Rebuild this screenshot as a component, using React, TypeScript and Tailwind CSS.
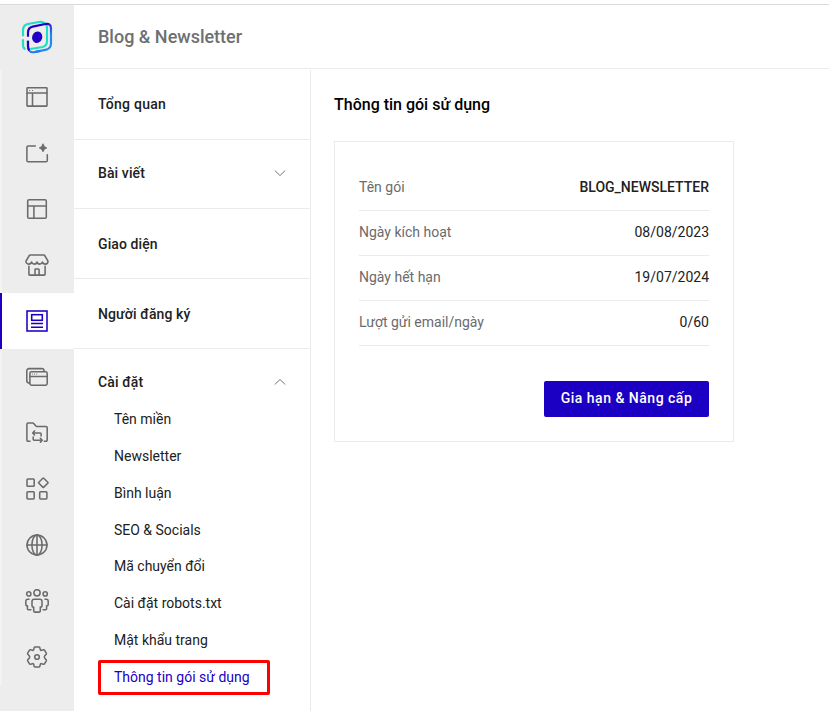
import type { ReactNode } from "react";

function Icon({ children }: { children: ReactNode }) {
  return (
    <svg
      width="24"
      height="24"
      viewBox="0 0 24 24"
      fill="none"
      stroke="currentColor"
      strokeWidth="1.55"
      strokeLinecap="round"
      strokeLinejoin="round"
    >
      {children}
    </svg>
  );
}

const navIcons: { name: string; art: ReactNode }[] = [
  {
    name: "pages",
    art: (
      <>
        <rect x="2" y="2.7" width="20" height="18.4" rx="0.6" />
        <path d="M2 8h20M7.5 8v13" />
        <path d="M4.6 5.5h.1M7.5 5.5h.1" strokeWidth="1.2" />
      </>
    ),
  },
  {
    name: "popup",
    art: (
      <>
        <path d="M10.3 4.9H3.2a1.3 1.3 0 0 0-1.3 1.3v13.2a1.3 1.3 0 0 0 1.3 1.3h17.8a1.3 1.3 0 0 0 1.3-1.3v-5.7" />
        <path
          d="M18 3.2Q18.8 6.2 21.7 6.9Q18.8 7.7 18 10.7Q17.2 7.7 14.3 6.9Q17.2 6.2 18 3.2z"
          fill="currentColor"
          strokeWidth="1"
        />
      </>
    ),
  },
  {
    name: "layout",
    art: (
      <>
        <rect x="2.7" y="2.7" width="18.6" height="18.6" rx="1.3" />
        <path d="M2.7 9h18.6M8.9 9v12.3" />
      </>
    ),
  },
  {
    name: "store",
    art: (
      <>
        <path d="M5.2 2h13.6a1 1 0 0 1 .9.5l3.3 5.7c0 1.7-1.1 2.9-2.7 2.9s-2.7-.9-2.9-2.1c-.3 1.2-1.2 2.1-2.7 2.1s-2.5-.9-2.7-2.1c-.2 1.2-1.2 2.1-2.7 2.1s-2.4-.9-2.7-2.1c-.2 1.2-1.3 2.1-2.9 2.1S1 9.9 1 8.2l3.3-5.7a1 1 0 0 1 .9-.5z" />
        <path d="M3.9 13.2v8a.9.9 0 0 0 .9.9h14.4a.9.9 0 0 0 .9-.9v-8M10 22v-5.3a.7.7 0 0 1 .7-.7h2.7a.7.7 0 0 1 .7.7V22" />
      </>
    ),
  },
  {
    name: "blog",
    art: (
      <>
        <rect x="2" y="2" width="20" height="20" strokeLinejoin="miter" />
        <rect x="6.7" y="5.7" width="10.6" height="5.6" strokeLinejoin="miter" />
        <path d="M6 14.4h12M6 18.2h12" strokeLinecap="butt" />
      </>
    ),
  },
  {
    name: "windows",
    art: (
      <>
        <rect x="4.9" y="6.8" width="17.3" height="13.4" rx="1.6" />
        <path d="M4.9 11.4h17.3" />
        <path d="M4.3 18.2a2.6 2.6 0 0 1-2.5-2.6V5.8a2.2 2.2 0 0 1 2.2-2.2h12.7a2.6 2.6 0 0 1 2.5 2.6" />
        <path d="M7.3 9.1h.1M9.5 9.1h.1M11.7 9.1h.1" strokeWidth="1" />
      </>
    ),
  },
  {
    name: "folder",
    art: (
      <>
        <path d="M5 20.3H3.1A1.2 1.2 0 0 1 1.9 19.1V3.2A1.2 1.2 0 0 1 3.1 2h4.7a1.2 1.2 0 0 1 .9.4l2.2 2.7a1.2 1.2 0 0 0 .9.4h9.2a1.2 1.2 0 0 1 1.2 1.2v12.4a1.2 1.2 0 0 1-1.2 1.2h-1.7" />
        <path d="M9.5 9.9L7.7 11.9l1.8 2M7.9 11.9h7.3a.9.9 0 0 1 .9.9v2.2M15.4 17.2l1.8 2-1.8 2M17 19.2H9.1a.9.9 0 0 1-.9-.9v-2.2" />
      </>
    ),
  },
  {
    name: "apps",
    art: (
      <>
        <rect x="2" y="2" width="7.2" height="7.2" rx="0.8" />
        <rect x="2" y="14.7" width="7.2" height="7.2" rx="0.8" />
        <rect x="14.7" y="14.7" width="7.2" height="7.2" rx="0.8" />
        <rect x="14.8" y="2.2" width="7" height="7" rx="0.7" transform="rotate(45 18.3 5.7)" />
      </>
    ),
  },
  {
    name: "globe",
    art: (
      <>
        <circle cx="12" cy="12" r="10" />
        <ellipse cx="12" cy="12" rx="5.1" ry="10" />
        <path d="M2 12h20M12 2v20" />
      </>
    ),
  },
  {
    name: "people",
    art: (
      <>
        <circle cx="12" cy="3.8" r="3.1" />
        <circle cx="3.8" cy="4.9" r="2.1" />
        <circle cx="20.2" cy="4.9" r="2.1" />
        <path d="M9.2 10.2h5.6a2.2 2.2 0 0 1 2.2 2.2v4.3a1.4 1.4 0 0 1-1.4 1.4h-.3v4a1 1 0 0 1-1 1H9.7a1 1 0 0 1-1-1v-4h-.3A1.4 1.4 0 0 1 7 16.7v-4.3a2.2 2.2 0 0 1 2.2-2.2z" />
        <path d="M4 10.2h-1.2A2 2 0 0 0 .8 12.2v3.4a1.2 1.2 0 0 0 1.2 1.2h.4v3a1 1 0 0 0 1 1h2.5M20 10.2h1.2a2 2 0 0 1 2 2v3.4a1.2 1.2 0 0 1-1.2 1.2h-.4v3a1 1 0 0 1-1 1h-2.5" />
      </>
    ),
  },
  {
    name: "settings",
    art: (
      <>
        <path d="M10 2h4a.8.8 0 0 1 .8.6l.5 2a1 1 0 0 0 1.3.7l1.9-.6a.9.9 0 0 1 1 .4l1.8 3.1a.9.9 0 0 1-.1 1l-1.4 1.6a1.8 1.8 0 0 0 0 2.4l1.4 1.6a.9.9 0 0 1 .1 1l-1.8 3.1a.9.9 0 0 1-1 .4l-1.9-.6a1 1 0 0 0-1.3.7l-.5 2a.8.8 0 0 1-.8.6h-4a.8.8 0 0 1-.8-.6l-.5-2a1 1 0 0 0-1.3-.7l-1.9.6a.9.9 0 0 1-1-.4l-1.8-3.1a.9.9 0 0 1 .1-1l1.4-1.6a1.8 1.8 0 0 0 0-2.4L2.8 9.2a.9.9 0 0 1-.1-1l1.8-3.1a.9.9 0 0 1 1-.4l1.9.6a1 1 0 0 0 1.3-.7l.5-2A.8.8 0 0 1 10 2z" />
        <circle cx="12" cy="12" r="2.3" />
      </>
    ),
  },
];

function Logo() {
  return (
    <svg width="34" height="36" viewBox="60 57 102 108" fill="none" strokeWidth="6.5">
      <defs>
        <linearGradient id="frame" x1="95" y1="75" x2="150" y2="115" gradientUnits="userSpaceOnUse">
          <stop offset="0.5" stopColor="#2000c4" />
          <stop offset="0.95" stopColor="#1e8af5" />
        </linearGradient>
      </defs>
      <path
        d="M69 109V91Q69 76 83 72L117 66Q131 64 139 75Q141 79 141 84V124Q141 138 128 141L91 147"
        stroke="#1fdfc2"
      />
      <path d="M76 148Q69 145 69 135V118" stroke="#1fdfc2" />
      <path d="M84 110V98Q84 83 98 80L136 72Q153 69 153 85V130Q153 145 139 149L105 156" stroke="url(#frame)" />
      <path d="M84 122V139Q84 160 105 156L122 152.5" stroke="#1e7cf2" />
      <path d="M84 122V139Q84 146 88 151" stroke="#2000c4" />
      <ellipse cx="111.5" cy="111.5" rx="15" ry="17.5" transform="rotate(20 111.5 111.5)" fill="#2000c4" />
    </svg>
  );
}

function Chevron({ up = false }: { up?: boolean }) {
  return (
    <svg width="12" height="8" viewBox="0 0 12 8" fill="none" stroke="#777" strokeWidth="1">
      <path d={up ? "M0.8 6.5L6 1.5L11.2 6.5" : "M0.8 1.5L6 6.5L11.2 1.5"} />
    </svg>
  );
}

const settingsLinks = [
  "Tên miền",
  "Newsletter",
  "Bình luận",
  "SEO & Socials",
  "Mã chuyển đổi",
  "Cài đặt robots.txt",
  "Mật khẩu trang",
];

const planRows = [
  { label: "Tên gói", value: "BLOG_NEWSLETTER", strong: true },
  { label: "Ngày kích hoạt", value: "08/08/2023" },
  { label: "Ngày hết hạn", value: "19/07/2024" },
  { label: "Lượt gửi email/ngày", value: "0/60" },
];

const menuRow = "flex items-center justify-between border-b border-[#ebebeb] px-6 font-medium tracking-[0.1px]";

export default function App() {
  return (
    <div className="flex h-[711px] w-[829px] flex-col overflow-hidden bg-white pt-1 font-['Roboto','Noto_Sans',sans-serif] text-sm text-[#212121]">
      <div className="flex min-h-0 flex-1 border-t border-[#d9d9d9]">
        <aside className="flex w-[74px] shrink-0 flex-col bg-[#ededed]">
          <div className="flex h-16 items-center justify-center">
            <Logo />
          </div>
          <nav>
            {navIcons.map(({ name, art }) => (
              <a
                key={name}
                className={
                  name === "blog"
                    ? "flex h-14 items-center justify-center border-l-2 border-[#1b00c3] bg-white pr-0.5 text-[#1b00c3]"
                    : "flex h-14 items-center justify-center border-l-2 border-[#f3f3f3] pr-0.5 text-[#6b6b6b]"
                }
              >
                <Icon>{art}</Icon>
              </a>
            ))}
          </nav>
        </aside>

        <div className="flex min-w-0 flex-1 flex-col">
          <header className="flex h-16 shrink-0 items-center border-b border-[#ebebeb] pl-6">
            <h1 className="text-lg font-medium text-[#6f6f6f]">Blog &amp; Newsletter</h1>
          </header>

          <div className="flex min-h-0 flex-1 pt-px">
            <div className="w-[237px] shrink-0 border-r border-[#ebebeb]">
              <div className={`${menuRow} h-[70px] pb-0.5`}>
                <span className="tracking-[0.25px]">Tổng quan</span>
              </div>
              <div className={`${menuRow} h-[69px] pb-0.5`}>
                Bài viết
                <Chevron />
              </div>
              <div className={`${menuRow} h-[70px]`}>Giao diện</div>
              <div className={`${menuRow} h-[70px]`}>Người đăng ký</div>
              <div className="flex h-[52px] items-center justify-between px-6 pt-3.5 font-medium tracking-[0.1px]">
                Cài đặt
                <Chevron up />
              </div>
              <ul>
                {settingsLinks.map((link) => (
                  <li key={link} className="flex h-[36.75px] items-center pl-10">
                    {link}
                  </li>
                ))}
              </ul>
              <div className="ml-6 mt-[1.6px] flex h-[35px] w-[172px] items-center rounded-[2px] border-3 border-[#ff0000] pl-[13px] text-[#1b00c3]">
                Thông tin gói sử dụng
              </div>
            </div>

            <main className="pl-[23px] pt-[23px]">
              <h2 className="text-base font-medium text-black">Thông tin gói sử dụng</h2>
              <section className="mt-6 h-[301px] w-[400px] border border-[#ebebeb] px-6 pt-6">
                {planRows.map(({ label, value, strong }) => (
                  <div key={label} className="flex h-[45px] items-center justify-between border-b border-[#ebebeb] pb-0.5">
                    <span className="text-[#6b6b6b]">{label}</span>
                    <span className={strong ? "font-medium" : ""}>{value}</span>
                  </div>
                ))}
                <div className="mt-[35px] flex justify-end">
                  <button className="h-9 w-[165px] rounded-[2px] bg-[#1b00c3] pb-0.5 font-medium tracking-[0.5px] text-white">
                    Gia hạn &amp; Nâng cấp
                  </button>
                </div>
              </section>
            </main>
          </div>
        </div>
      </div>
    </div>
  );
}
